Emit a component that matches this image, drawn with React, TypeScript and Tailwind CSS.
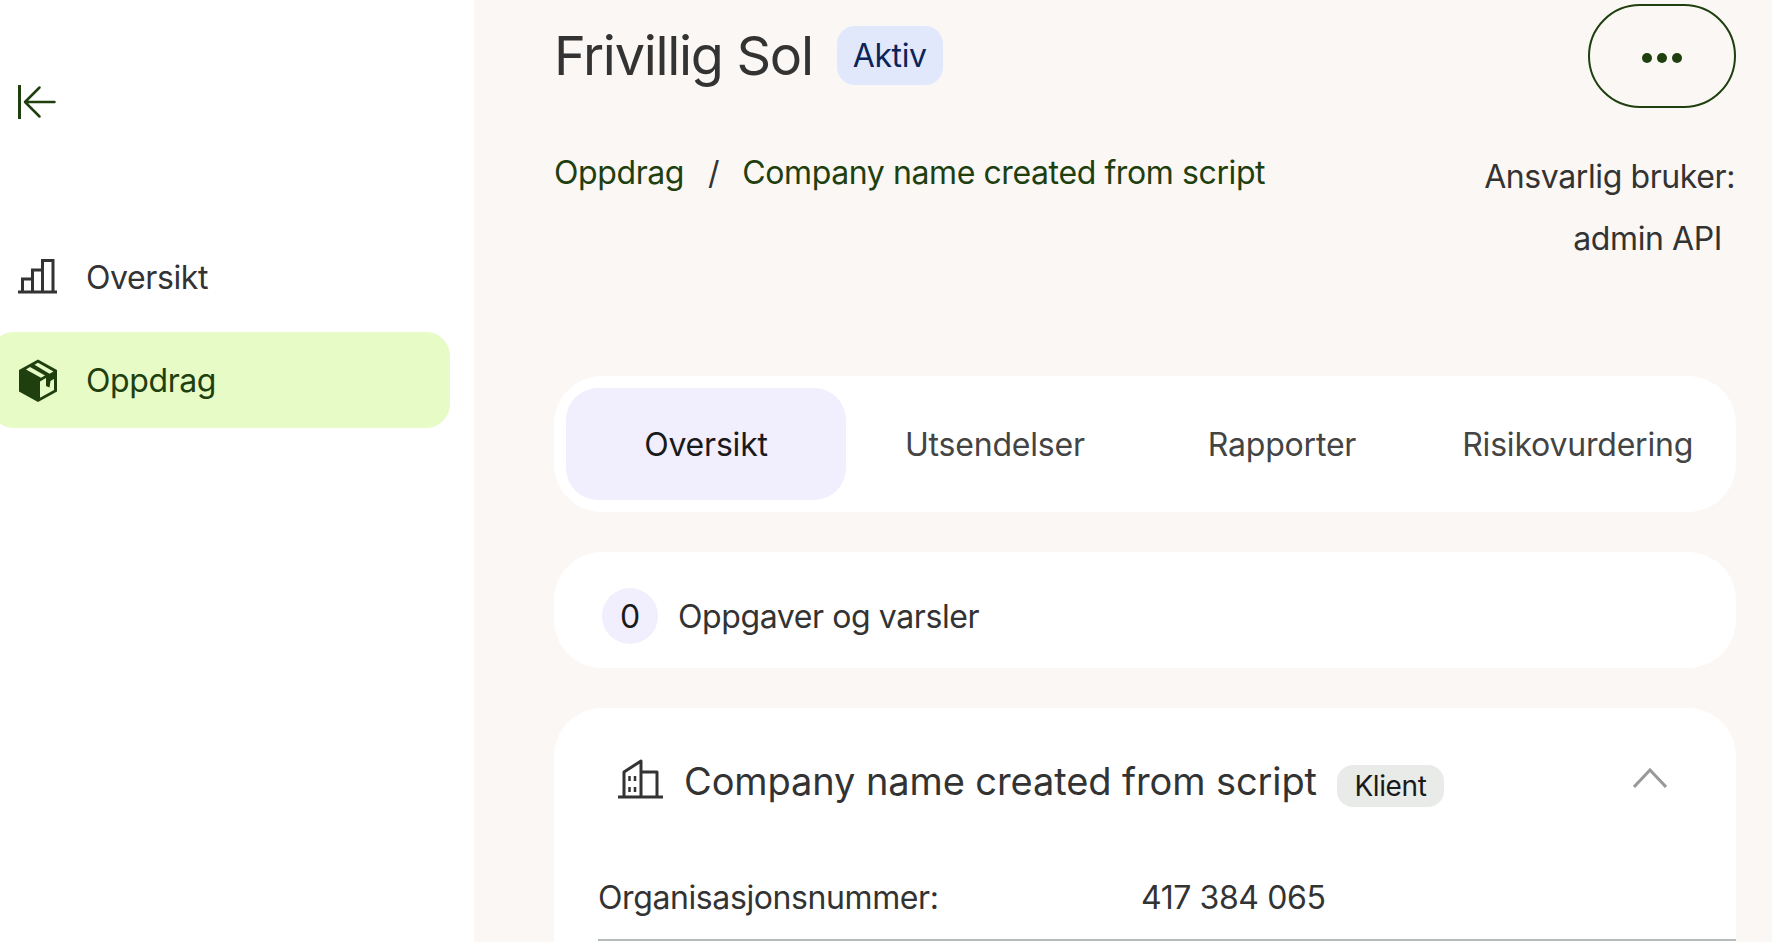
export default function App() {
  return (
    <div className="flex h-[942px] w-[1772px] overflow-hidden bg-[#faf7f4] font-['Inter',sans-serif] text-[32px] tracking-[-0.4px] text-[#333333]">
      <aside className="w-[474px] shrink-0 bg-white">
        <button className="ml-[18px] mt-[84px] block h-[36px] w-[38px]">
          <svg viewBox="0 0 38 36" width="38" height="36" fill="none" stroke="#1f3f0f" strokeWidth="2.5" strokeLinecap="round" strokeLinejoin="round">
            <path d="M1.500 1v34" strokeWidth="3" strokeLinecap="butt" />
            <path d="M36.500 18H7M21.500 3.500 7 18l14.500 14.500" />
          </svg>
        </button>
        <nav className="mt-[112px] flex flex-col gap-[8px]">
          <a className="flex h-[92px] w-[450px] items-center pl-[18px] text-[#333333]">
            <svg viewBox="0 0 39 35" width="39" height="35" fill="none" stroke="#333333" strokeWidth="3" className="mb-[3px] mr-[29px]">
              <path d="M0 33h39" />
              <path d="M4.500 33V20h10v13M14.500 33V11h10v22M24.500 33V1.500h10.500V33" />
            </svg>
            Oversikt
          </a>
          <a className="-ml-[10px] flex h-[96px] w-[460px] items-center rounded-[24px] bg-[#e6fbc6] pl-[28px] text-[#1f3f0f]">
            <svg viewBox="0 0 40 43" width="40" height="43" className="mr-[28px]">
              <path d="M20 .5 39 11v21.500L20 43 1 32.500V11Z" fill="#1f3f0f" />
              <path d="M8 10.500 12 8l15 8.500-4 2.300ZM16.500 5.800 20 3.800l15.500 8.600-4 2.300Z" fill="#e6fbc6" />
              <path d="M22 22.500l6-3.400V27l3.500 1.500 1-6.500 3.500-2V31L22 38.800Z" fill="#e6fbc6" />
            </svg>
            <span className="pt-[2px]">Oppdrag</span>
          </a>
        </nav>
      </aside>

      <main className="min-w-0 flex-1 pl-[80px] pr-[36px] pt-[4px]">
        <header className="flex items-start justify-between">
          <div className="flex items-center pt-[22px]">
            <h1 className="text-[54px] leading-[59px] font-normal tracking-[-1.3px]">Frivillig Sol</h1>
            <span className="ml-[24px] flex h-[59px] w-[106px] items-center justify-center rounded-[18px] bg-[#e1e8fb] text-[#0c2458]">Aktiv</span>
          </div>
          <button className="flex h-[104px] w-[148px] items-center justify-center gap-[5px] rounded-[52px] border-2 border-[#1f3f0f] pt-[4px]">
            <span className="h-[10px] w-[10px] rounded-full bg-[#1f3f0f]" />
            <span className="h-[10px] w-[10px] rounded-full bg-[#1f3f0f]" />
            <span className="h-[10px] w-[10px] rounded-full bg-[#1f3f0f]" />
          </button>
        </header>

        <div className="mt-[42px] flex items-start justify-between">
          <div className="flex items-center leading-[46px] text-[#1f3f0f]">
            <span>Oppdrag</span>
            <span className="ml-[24px] mr-[23px] text-[#333333]">/</span>
            <span>Company name created from script</span>
          </div>
          <div className="-mt-[4px] mr-[1px] flex flex-col items-end leading-[62px]">
            <span>Ansvarlig bruker:</span>
            <span className="pr-[13px]">admin API</span>
          </div>
        </div>

        <div className="mt-[106px] flex h-[136px] items-center rounded-[48px] bg-white pl-[12px] tracking-[-0.2px] text-[#444444]">
          <span className="flex h-[112px] w-[280px] items-center justify-center rounded-[32px] bg-[#f1eefd] pt-[2px] text-[#1a1a1a]">Oversikt</span>
          <span className="ml-[59px] pt-[2px]">Utsendelser</span>
          <span className="ml-[123px] pt-[2px]">Rapporter</span>
          <span className="ml-[106px] pt-[2px]">Risikovurdering</span>
        </div>

        <div className="mt-[40px] flex h-[116px] items-center rounded-[48px] bg-white pl-[48px] pt-[12px]">
          <span className="flex h-[56px] w-[56px] items-center justify-center rounded-full bg-[#f1eefd] pt-[1px] text-[#1a1a1a]">0</span>
          <span className="ml-[20px] pt-[2px]">Oppgaver og varsler</span>
        </div>

        <section className="mt-[40px] h-[300px] rounded-t-[48px] bg-white">
          <div className="flex h-[146px] items-center pl-[64px] pr-[69px]">
            <svg viewBox="0 0 45 40" width="45" height="40" fill="none" stroke="#333333" strokeWidth="3" strokeLinejoin="round" className="mb-[4px]">
              <path d="M0 38h45" />
              <path d="M6 37V13L23 2v35M23 13h16v24" />
              <path d="M11.500 17v5M17 17v5M11.500 28v5M17 28v5" strokeWidth="2.500" />
            </svg>
            <h2 className="ml-[21px] text-[38px] font-normal tracking-[-0.1px]">Company name created from script</h2>
            <span className="ml-[20px] mt-[9px] flex h-[42px] w-[107px] items-center justify-center rounded-[16px] bg-[#e9ebe9] text-[28px] text-[#1a1a1a]">Klient</span>
            <svg viewBox="0 0 34 20" width="34" height="20" fill="none" stroke="#999999" strokeWidth="3" className="ml-auto mb-[6px]">
              <path d="M1 19 17 2l16 17" />
            </svg>
          </div>
          <div className="ml-[44px] flex h-[87px] items-start border-b-2 border-[#b5bcb9] pt-[20px]">
            <span className="w-[543px]">Organisasjonsnummer:</span>
            <span>417 384 065</span>
          </div>
        </section>
      </main>
    </div>
  );
}
